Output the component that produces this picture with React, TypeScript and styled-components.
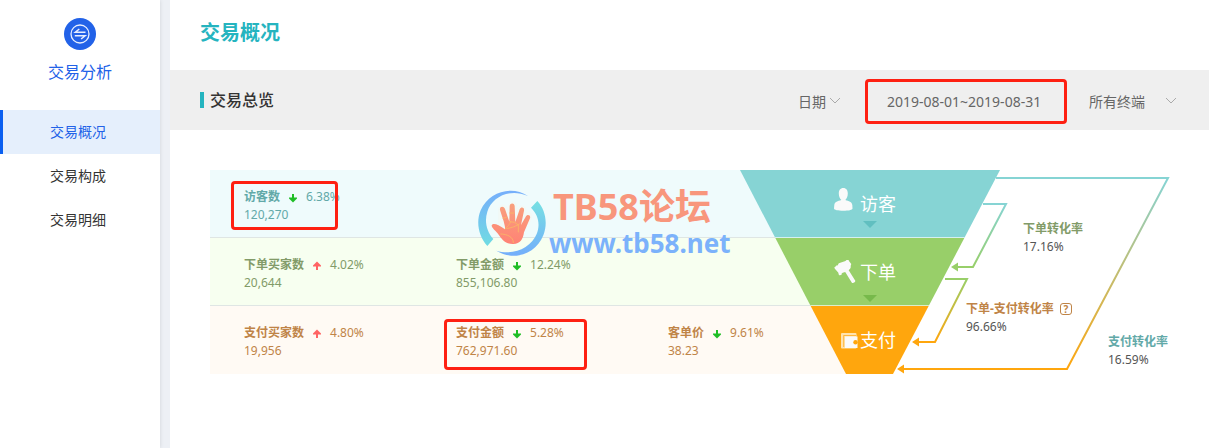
import React from "react";
import styled, { createGlobalStyle } from "styled-components";

const GlobalStyle = createGlobalStyle`
  * { box-sizing: border-box; }
  body {
    margin: 0;
    background: #edf0f5;
    color: #333;
    font-family: "Noto Sans", "Noto Sans CJK SC", sans-serif;
    font-size: 14px;
  }
  button, select { font: inherit; color: inherit; background: none; border: 0; padding: 0; margin: 0; }
  h1, h2, p, dl, dd, dt, ul { margin: 0; padding: 0; }
`;

const Page = styled.div`
  display: flex;
  gap: 10px;
  min-height: 100vh;
`;

const Sidebar = styled.aside`
  flex: 0 0 160px;
  background: #fff;
  box-shadow: 0 0 4px rgba(0, 0, 0, 0.12);
`;

const SidebarHead = styled.div`
  display: flex;
  flex-direction: column;
  align-items: center;
  gap: 10px;
  height: 110px;
  padding-top: 18px;
  color: #2262e8;
  font-size: 16px;
  line-height: 24px;
`;

const NavList = styled.ul`
  list-style: none;
`;

const NavLink = styled.a<{ $active?: boolean }>`
  display: block;
  height: 44px;
  padding-left: 47px;
  border-left: 3px solid ${(p) => (p.$active ? "#0a5ff0" : "transparent")};
  background: ${(p) => (p.$active ? "#e5effc" : "transparent")};
  color: ${(p) => (p.$active ? "#2262e8" : "#333")};
  line-height: 44px;
  text-decoration: none;
`;

const Main = styled.main`
  flex: 1;
  min-width: 1039px;
  background: #fff;
`;

const Title = styled.h1`
  height: 70px;
  padding-left: 30px;
  color: #25b4bf;
  font-size: 20px;
  line-height: 66px;
`;

const Toolbar = styled.div`
  display: flex;
  align-items: center;
  gap: 22px;
  height: 60px;
  padding: 0 30px;
  background: #efefef;
  color: #666;
`;

const SectionTitle = styled.h2`
  margin-right: auto;
  padding-left: 6px;
  border-left: 4px solid #25b4bf;
  color: #333;
  font-size: 16px;
  font-weight: 500;
  line-height: 16px;
`;

const SelectBox = styled.label<{ $width: number }>`
  display: flex;
  align-items: center;
  position: relative;
  width: ${(p) => p.$width}px;
  height: 24px;
  margin-top: 2px;
  svg { position: absolute; right: 2px; pointer-events: none; }
`;

const Select = styled.select`
  appearance: none;
  width: 100%;
  height: 24px;
`;

const DateRange = styled.button`
  position: relative;
  width: 202px;
  height: 45px;
  margin-top: 2px;
  padding-left: 22px;
  text-align: left;
`;

const Marker = styled.span<{ $inset: string }>`
  position: absolute;
  inset: ${(p) => p.$inset};
  border: 3px solid #fe2012;
  border-radius: 4px;
  pointer-events: none;
`;

const Overview = styled.section`
  display: grid;
  grid-template-columns: minmax(530px, 1fr) 130px 329px;
  position: relative;
  margin: 40px 10px 40px 40px;
`;

const Bands = styled.div`
  grid-area: 1 / 1 / 2 / 3;
`;

const tones = {
  visit: { bg: "#effbfc", fg: "#62a9a8" },
  order: { bg: "#f7fff0", fg: "#829b68" },
  pay: { bg: "#fffaf4", fg: "#bf8447" },
};
type Tone = keyof typeof tones;

const Band = styled.dl<{ $tone: Tone }>`
  display: flex;
  height: 68px;
  padding: 18px 0 0 34px;
  border-bottom: 1px solid #dfe6e4;
  background: ${(p) => tones[p.$tone].bg};
  color: ${(p) => tones[p.$tone].fg};
  &:last-child { border-bottom: 0; }
`;

const Metric = styled.div`
  position: relative;
  flex: 0 0 212px;
  font-size: 12px;
  line-height: 18px;
`;

const MetricName = styled.dt`
  display: flex;
  align-items: center;
  gap: 8px;
  height: 18px;
  svg { position: relative; top: 1px; }
`;

const Diagram = styled.div`
  grid-area: 1 / 2 / 2 / 4;
  position: relative;
`;

const Stages = styled.div`
  width: 260px;
  clip-path: polygon(0 0, 260px 0, 153px 204px, 106px 204px);
`;

const Stage = styled.div<{ $color: string }>`
  display: flex;
  align-items: center;
  gap: 2px;
  position: relative;
  height: 68px;
  padding-left: 94px;
  border-bottom: 1px solid rgba(255, 255, 255, 0.65);
  background: ${(p) => p.$color};
  color: #fff;
  font-size: 18px;
  line-height: 24px;
  &:last-child { border-bottom: 0; }
`;

const Tip = styled.i<{ $top: number; $color: string }>`
  position: absolute;
  top: ${(p) => p.$top}px;
  left: 123px;
  border: 7px solid transparent;
  border-top-color: ${(p) => p.$color};
  border-bottom: 0;
`;

const Flows = styled.svg`
  position: absolute;
  top: 0;
  left: 0;
`;

const Rate = styled.dl<{ $x: number; $y: number; $color: string }>`
  position: absolute;
  left: ${(p) => p.$x}px;
  top: ${(p) => p.$y}px;
  color: #555;
  font-size: 12px;
  line-height: 18px;
  white-space: nowrap;
  dt {
    display: flex;
    align-items: center;
    height: 18px;
    color: ${(p) => p.$color};
    font-weight: 700;
  }
`;

const Help = styled.button`
  width: 12px;
  height: 12px;
  margin-left: 6px;
  border: 1px solid currentColor;
  border-radius: 3px;
  font-size: 10px;
  font-weight: 700;
  line-height: 10px;
`;

const Watermark = styled.div`
  display: flex;
  align-items: center;
  position: absolute;
  top: 17px;
  left: 267px;
  pointer-events: none;
  font-weight: 700;
  white-space: nowrap;
`;

const Forum = styled.p`
  padding-left: 6px;
  color: #f8967c;
  font-size: 36px;
  line-height: 40px;
`;

const Site = styled.p`
  padding-left: 2px;
  color: #7bb2fb;
  font-size: 26px;
  line-height: 32px;
`;

const Chevron = () => (
  <svg width="12" height="8" viewBox="0 0 12 8" fill="none" stroke="#aaa">
    <path d="M1 1l5 5 5-5" />
  </svg>
);

const Trend = ({ up }: { up?: boolean }) => (
  <svg width="10" height="10" viewBox="0 0 10 10" fill={up ? "#ff6464" : "#1fbe26"}>
    <path d={up ? "M5 0.500L9 4.500V5.500H6V9H4V5.500H1V4.500z" : "M4 1h2v3.500h3V5.500L5 9.500 1 5.500v-1h3z"} />
  </svg>
);

const TradeLogo = () => (
  <svg width="32" height="32" viewBox="0 0 32 32" fill="none" stroke="#e6eeff">
    <circle cx="16" cy="16" r="16" fill="#2262e8" stroke="none" />
    <circle cx="16" cy="16" r="9" strokeWidth="1.3" />
    <path d="M21.500 14.200H11.300l4-3.200M10.800 17.800h10.300l-4 3.200" strokeWidth="1.5" />
  </svg>
);

const PersonIcon = () => (
  <svg width="24" height="32" viewBox="0 0 24 32" fill="#fafafa">
    <path d="M9.300 0c3 0 4.500 2.300 4.500 5.500 0 2.700-1 5.300-2.500 6.500 3.500 1 6.700 2 7 5l.2 3.500c0 1.300-4 2.300-9.200 2.300S0 21.800 0 20.500L.3 17c.3-3 3.500-4 7-5C5.800 10.800 4.800 8.200 4.800 5.500 4.800 2.300 6.300 0 9.300 0z" />
  </svg>
);

const GavelIcon = () => (
  <svg width="24" height="32" viewBox="0 0 24 32" fill="#fafafa">
    <path d="M.2 11.800l2.600-2.500.8.200 1.200-2.300L11.500 5l1-.9 2-.1.800 1.600 2 2.300-.5 1.400-.2 2.700-1.900 2.300 6.600 10.500c.4 1.300-2.400 2.800-3.400 1.900L11.200 16l-2.500.7-1 .8-.3 1.500-2.400.2-.8-2.600L1.500 13.500z" />
  </svg>
);

const WalletIcon = () => (
  <svg width="24" height="32" viewBox="0 0 24 32">
    <rect x="7" y="9" width="15.500" height="15.500" rx="1" fill="#ffe3ae" />
    <path d="M9.500 11.500h12.500" stroke="#ffb73d" strokeWidth="1" />
    <path d="M9.700 11.500V23" stroke="#ffb73d" strokeWidth="1" />
    <path d="M11 12.500h12.500V24H11z" fill="#fafafa" />
    <circle cx="21.500" cy="18.300" r="2.200" fill="#ffa60d" />
  </svg>
);

const HandLogo = () => (
  <svg width="70" height="68" viewBox="20 12 210 204">
    <defs>
      <linearGradient id="ringA" x1="0" y1="0" x2="0" y2="1">
        <stop offset="0" stopColor="#76aefb" />
        <stop offset="1" stopColor="#70dce2" />
      </linearGradient>
      <linearGradient id="ringB" x1="0" y1="0" x2="0" y2="1">
        <stop offset="0" stopColor="#76e0e2" />
        <stop offset="1" stopColor="#74aefb" />
      </linearGradient>
      <linearGradient id="palm" x1="0" y1="0" x2="0" y2="1">
        <stop offset="0" stopColor="#f8a07e" />
        <stop offset="1" stopColor="#ff8375" />
      </linearGradient>
    </defs>
    <path fill="url(#ringA)" d="M173 33C125 0 55 20 31 76c-15 36-6 78 20 107l18-21C48 138 42 108 51 80 65 36 117 9 173 33z" />
    <path fill="url(#ringB)" d="M201 48c25 27 32 67 18 103-22 56-86 79-141 46 52 16 104-9 121-50 11-28 6-56-17-79z" />
    <path fill="#f4f8f3" d="M84 72c4-18 20-16 28-5 4-22 28-22 30 1 12-13 26-6 26 12 16-4 20 10 16 22l-10 18-90 10z" opacity=".7" />
    <path fill="url(#palm)" d="M64 121c5-8 18-3 40 12 1-6-2-15-4-24l-11-34c-2-11 11-13 15-3l13 38 1-47c1-10 14-10 15 0l2 48 13-38c4-9 15-6 13 4l-9 43 15-26c5-8 15-3 12 6l-18 42c-3 22-12 36-34 35-22 0-34-16-42-28-8-12-21-18-21-28z" />
    <path fill="none" stroke="#f9b866" strokeWidth="2.500" d="M103 132c8-6 16-15 18-23M108 131c14-2 32-8 40-15M90 147c20 0 40 9 39 27M118 110l15 2 11 8v22M97 100l12-3M117 84h14" />
  </svg>
);

interface MetricData {
  name: string;
  rate: string;
  value: string;
  up?: boolean;
  marker?: string;
}

const bands: { tone: Tone; metrics: MetricData[] }[] = [
  {
    tone: "visit",
    metrics: [{ name: "访客数", rate: "6.38%", value: "120,270", marker: "-7px 118px 7px -13px" }],
  },
  {
    tone: "order",
    metrics: [
      { name: "下单买家数", rate: "4.02%", value: "20,644", up: true },
      { name: "下单金额", rate: "12.24%", value: "855,106.80" },
    ],
  },
  {
    tone: "pay",
    metrics: [
      { name: "支付买家数", rate: "4.80%", value: "19,956", up: true },
      { name: "支付金额", rate: "5.28%", value: "762,971.60", marker: "-5px 81px 4px -12px" },
      { name: "客单价", rate: "9.61%", value: "38.23" },
    ],
  },
];

export default function App() {
  return (
    <>
      <GlobalStyle />
      <Page>
        <Sidebar>
          <SidebarHead>
            <TradeLogo />
            <span>交易分析</span>
          </SidebarHead>
          <nav>
            <NavList>
              <li><NavLink href="#overview" $active>交易概况</NavLink></li>
              <li><NavLink href="#structure">交易构成</NavLink></li>
              <li><NavLink href="#detail">交易明细</NavLink></li>
            </NavList>
          </nav>
        </Sidebar>
        <Main>
          <Title>交易概况</Title>
          <Toolbar>
            <SectionTitle>交易总览</SectionTitle>
            <SelectBox $width={45}>
              <Select aria-label="日期"><option>日期</option></Select>
              <Chevron />
            </SelectBox>
            <DateRange type="button">
              2019-08-01~2019-08-31
              <Marker $inset="0" />
            </DateRange>
            <SelectBox $width={90}>
              <Select aria-label="所有终端"><option>所有终端</option></Select>
              <Chevron />
            </SelectBox>
          </Toolbar>
          <Overview>
            <Bands>
              {bands.map((band) => (
                <Band key={band.tone} $tone={band.tone}>
                  {band.metrics.map((m) => (
                    <Metric key={m.name}>
                      <MetricName>
                        <b>{m.name}</b>
                        <Trend up={m.up} />
                        <span>{m.rate}</span>
                      </MetricName>
                      <dd>{m.value}</dd>
                      {m.marker && <Marker $inset={m.marker} />}
                    </Metric>
                  ))}
                </Band>
              ))}
            </Bands>
            <Diagram>
              <Stages>
                <Stage $color="#86d4d4">
                  <PersonIcon />
                  访客
                  <Tip $top={51} $color="#61bfc0" />
                </Stage>
                <Stage $color="#98cf69">
                  <GavelIcon />
                  下单
                  <Tip $top={57} $color="#77b94b" />
                </Stage>
                <Stage $color="#ffa60d">
                  <WalletIcon />
                  支付
                </Stage>
              </Stages>
              <Flows width="440" height="204" viewBox="0 0 440 204" fill="none" strokeWidth="2">
                <defs>
                  <linearGradient id="visitPay" gradientUnits="userSpaceOnUse" x1="0" y1="9" x2="0" y2="199">
                    <stop offset="0" stopColor="#86d4d4" />
                    <stop offset="1" stopColor="#ffa60d" />
                  </linearGradient>
                  <linearGradient id="visitOrder" gradientUnits="userSpaceOnUse" x1="0" y1="34" x2="0" y2="97">
                    <stop offset="0" stopColor="#86d4d4" />
                    <stop offset="1" stopColor="#98cf69" />
                  </linearGradient>
                  <linearGradient id="orderPay" gradientUnits="userSpaceOnUse" x1="0" y1="109" x2="0" y2="172">
                    <stop offset="0" stopColor="#98cf69" />
                    <stop offset="1" stopColor="#ffa60d" />
                  </linearGradient>
                </defs>
                <path stroke="url(#visitPay)" d="M256 8h172L327 199H163" />
                <path stroke="url(#visitOrder)" d="M243 34h23l-33 63h-17" />
                <path stroke="url(#orderPay)" d="M205 109h22l-32 63h-17" />
                <path fill="#ffa60d" d="M157 199l7-4.500v9zM172 172l7-4.500v9z" />
                <path fill="#98cf69" d="M211 97l7-4.500v9z" />
              </Flows>
              <Rate $x={283} $y={50} $color="#829b68">
                <dt>下单转化率</dt>
                <dd>17.16%</dd>
              </Rate>
              <Rate $x={226} $y={130} $color="#bf8447">
                <dt>下单-支付转化率<Help type="button" aria-label="说明">?</Help></dt>
                <dd>96.66%</dd>
              </Rate>
              <Rate $x={368} $y={163} $color="#62a9a8">
                <dt>支付转化率</dt>
                <dd>16.59%</dd>
              </Rate>
            </Diagram>
            <Watermark>
              <HandLogo />
              <div>
                <Forum>TB58论坛</Forum>
                <Site>www.tb58.net</Site>
              </div>
            </Watermark>
          </Overview>
        </Main>
      </Page>
    </>
  );
}
